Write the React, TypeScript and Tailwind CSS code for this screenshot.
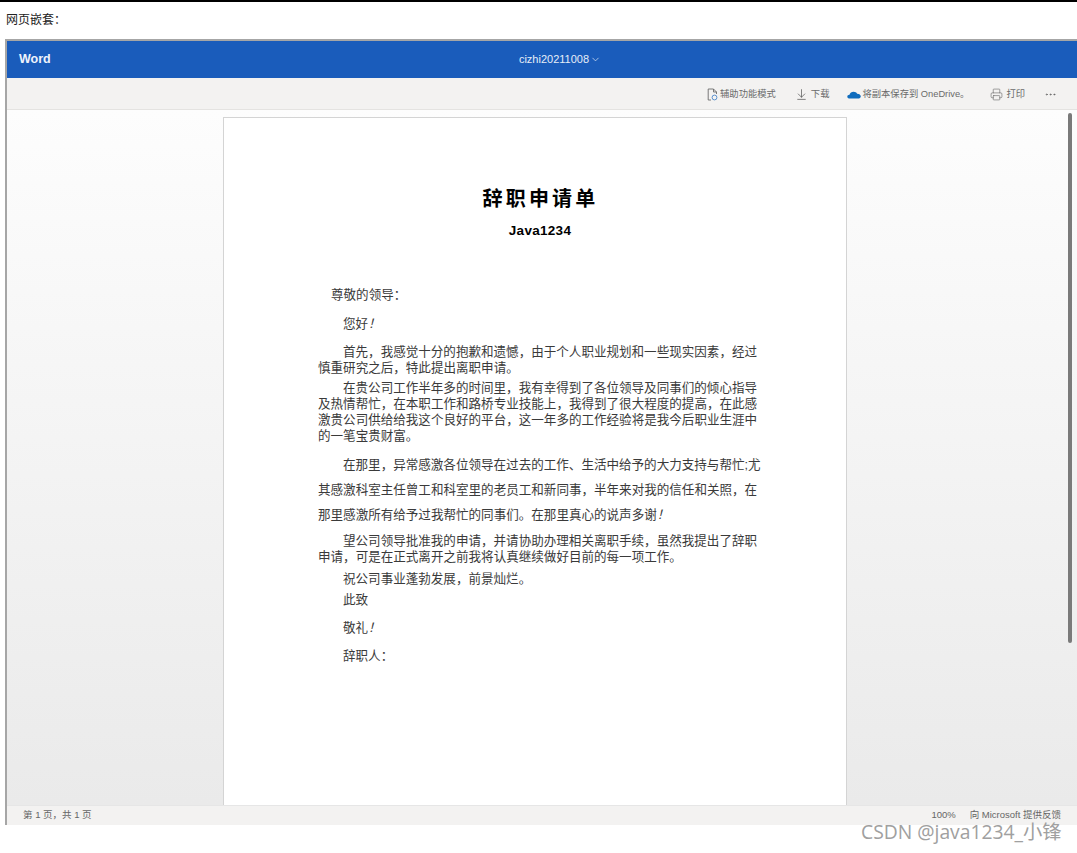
import { ArrowDownToLine, Printer, ChevronDown, MoreHorizontal } from "lucide-react";

const cjk = "font-['Liberation_Sans','Noto_Sans_CJK_SC',sans-serif]";

function AccessIcon() {
  return (
    <svg width="11" height="13" viewBox="0 0 11 13" fill="none" stroke="#6b6b6b" strokeWidth="0.9">
      <path d="M4 12H1.2V1H6.5L9.5 4V6" />
      <path d="M6.5 1V4H9.5" />
      <circle cx="7.5" cy="9.5" r="2.4" stroke="#4a86c8" />
    </svg>
  );
}

function CloudIcon() {
  return (
    <svg width="14" height="8" viewBox="0 0 14 10" preserveAspectRatio="none" className="mt-[1px]">
      <path d="M3 9.5C1.3 9.5 0.3 8.4 0.3 7.1C0.3 5.8 1.3 4.9 2.5 4.8C3 2.4 4.6 1 6.6 1C8.2 1 9.5 1.9 10.1 3.3C12.2 3.2 13.8 4.8 13.8 6.6C13.8 8.3 12.5 9.5 11 9.5Z" fill="#0f6cbd" />
    </svg>
  );
}

function Line({ children, indent = false, h = "h-4" }: { children: React.ReactNode; indent?: boolean; h?: string }) {
  return <div className={`${h} leading-4 whitespace-nowrap ${indent ? "pl-[25px]" : ""}`}>{children}</div>;
}

export default function App() {
  return (
    <div className={`relative h-[853px] w-[1077px] overflow-hidden bg-white ${cjk}`}>
      <div className="h-[2px] bg-black" />
      <div className="flex h-[37px] items-center pl-[6px] pb-[1px] text-[12px] text-[#222]">网页嵌套：</div>

      <div className="ml-[5px] flex h-[786px] flex-col border-l-2 border-t-2 border-[#a6a6a6]">
        <header className="relative flex h-[37px] shrink-0 items-center justify-center bg-[#1a5cbb] text-white">
          <span className="absolute left-[12px] text-[12.5px] font-bold text-[#eef3fb]">Word</span>
          <span className="ml-[36px] flex items-center gap-[1px] text-[11px] text-[#e6edf8]">
            cizhi20211008
            <ChevronDown size={11} strokeWidth={1.5} />
          </span>
        </header>

        <div className="flex h-[32px] shrink-0 items-center justify-end border-b border-[#e4e3e1] bg-[#f3f2f1] pr-[20px] pt-[1px] text-[9.3px] text-[#6a6a6a]">
          <span className="flex items-center gap-[2px]"><AccessIcon /><span className="pt-[2px]">辅助功能模式</span></span>
          <span className="ml-[19px] flex items-center gap-[3px]">
            <ArrowDownToLine size={13} strokeWidth={1.2} className="text-[#444]" /><span className="pt-[2px]">下载</span>
          </span>
          <span className="ml-[18px] flex items-center gap-[1px]"><CloudIcon /><span className="pt-[2px]">将副本保存到 OneDrive。</span></span>
          <span className="ml-[21px] flex items-center gap-[3px]">
            <Printer size={13} strokeWidth={1} className="text-[#555]" /><span className="pt-[2px]">打印</span>
          </span>
          <MoreHorizontal size={13} strokeWidth={1.2} className="ml-[19px] text-[#555]" />
        </div>

        <main className="relative flex min-h-0 flex-1 justify-center overflow-hidden bg-gradient-to-b from-[#fdfdfd] to-[#eaeaea] pr-[14px] pt-[7px]">
          <article className="h-[688px] w-[624px] shrink-0 border border-b-0 border-[#d4d4d4] bg-white pl-[94px] text-[12.55px] text-[#3a3a3a]">
            <h1 className="mt-[68px] pr-[83px] text-center font-['Liberation_Serif','Noto_Sans_CJK_SC',serif] text-[20px] font-bold leading-[26px] tracking-[3.2px] text-black">
              辞职申请单
            </h1>
            <div className="mt-[10px] pr-[84px] text-center text-[13.5px] font-bold leading-[18px] tracking-[0.3px] text-black">Java1234</div>

            <div className="mt-[47px] pl-[13px]"><Line>尊敬的领导：</Line></div>
            <div className="mt-[13px]"><Line indent>您好<i>！</i></Line></div>
            <div className="mt-[12px]">
              <Line indent>首先，我感觉十分的抱歉和遗憾，由于个人职业规划和一些现实因素，经过</Line>
              <Line>慎重研究之后，特此提出离职申请。</Line>
            </div>
            <div className="mt-[4px]">
              <Line indent>在贵公司工作半年多的时间里，我有幸得到了各位领导及同事们的倾心指导</Line>
              <Line>及热情帮忙，在本职工作和路桥专业技能上，我得到了很大程度的提高，在此感</Line>
              <Line>激贵公司供给给我这个良好的平台，这一年多的工作经验将是我今后职业生涯中</Line>
              <Line>的一笔宝贵财富。</Line>
            </div>
            <div className="mt-[13px]">
              <Line indent h="h-[25px]">在那里，异常感激各位领导在过去的工作、生活中给予的大力支持与帮忙;尤</Line>
              <Line h="h-[25px]">其感激科室主任曾工和科室里的老员工和新同事，半年来对我的信任和关照，在</Line>
              <Line h="h-[25px]">那里感激所有给予过我帮忙的同事们。在那里真心的说声多谢<i>！</i></Line>
            </div>
            <div className="mt-[1px]">
              <Line indent>望公司领导批准我的申请，并请协助办理相关离职手续，虽然我提出了辞职</Line>
              <Line>申请，可是在正式离开之前我将认真继续做好目前的每一项工作。</Line>
            </div>
            <div className="mt-[6px]"><Line indent>祝公司事业蓬勃发展，前景灿烂。</Line></div>
            <div className="mt-[5px]"><Line indent>此致</Line></div>
            <div className="mt-[12px]"><Line indent>敬礼<i>！</i></Line></div>
            <div className="mt-[12px]"><Line indent>辞职人：</Line></div>
          </article>
          <div className="absolute right-[5px] top-[3px] h-[530px] w-[4px] rounded-full bg-[#7a7a7a]" />
        </main>

        <footer className="flex h-[20px] shrink-0 items-center justify-between border-t border-[#e6e6e6] bg-[#f3f2f1] pl-[16px] pr-[16px] text-[9.5px] text-[#666]">
          <span>第 1 页，共 1 页</span>
          <span className="flex gap-[14px]"><span>100%</span><span>向 Microsoft 提供反馈</span></span>
        </footer>
      </div>

      <div className="absolute left-[861px] top-[822px] font-['Open_Sans','Noto_Sans_CJK_SC',sans-serif] text-[19.3px] leading-[20px] text-[#a0a0a0]">
        CSDN @java1234_小锋
      </div>
    </div>
  );
}
